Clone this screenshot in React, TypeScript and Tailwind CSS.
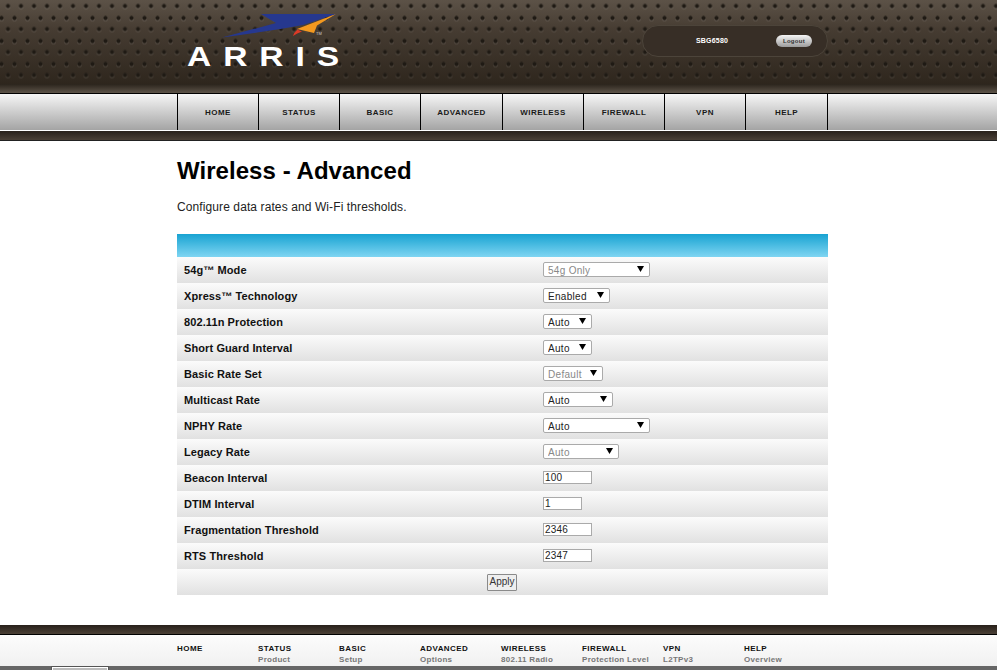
import React from "react";

const navItems: [string, string][] = [
  ["HOME", "w-[81px]"],
  ["STATUS", "w-[81px]"],
  ["BASIC", "w-[81px]"],
  ["ADVANCED", "w-[82px]"],
  ["WIRELESS", "w-[81px]"],
  ["FIREWALL", "w-[81px]"],
  ["VPN", "w-[81px]"],
  ["HELP", "w-[83px]"],
];

const footerCols: [string, string[]][] = [
  ["HOME", []],
  ["STATUS", ["Product", "Information"]],
  ["BASIC", ["Setup"]],
  ["ADVANCED", ["Options"]],
  ["WIRELESS", ["802.11 Radio"]],
  ["FIREWALL", ["Protection Level"]],
  ["VPN", ["L2TPv3"]],
  ["HELP", ["Overview"]],
];

type Row =
  | { label: string; kind: "select"; value: string; w: string; off?: boolean }
  | { label: string; kind: "input"; value: string; w: string };

const rows: Row[] = [
  { label: "54g™ Mode", kind: "select", value: "54g Only", w: "w-[107px]", off: true },
  { label: "Xpress™ Technology", kind: "select", value: "Enabled", w: "w-[67px]" },
  { label: "802.11n Protection", kind: "select", value: "Auto", w: "w-[49px]" },
  { label: "Short Guard Interval", kind: "select", value: "Auto", w: "w-[49px]" },
  { label: "Basic Rate Set", kind: "select", value: "Default", w: "w-[60px]", off: true },
  { label: "Multicast Rate", kind: "select", value: "Auto", w: "w-[70px]" },
  { label: "NPHY Rate", kind: "select", value: "Auto", w: "w-[107px]" },
  { label: "Legacy Rate", kind: "select", value: "Auto", w: "w-[76px]", off: true },
  { label: "Beacon Interval", kind: "input", value: "100", w: "w-[49px]" },
  { label: "DTIM Interval", kind: "input", value: "1", w: "w-[39px]" },
  { label: "Fragmentation Threshold", kind: "input", value: "2346", w: "w-[49px]" },
  { label: "RTS Threshold", kind: "input", value: "2347", w: "w-[49px]" },
];

function Logo() {
  return (
    <div className="relative w-[160px] h-[70px]">
      <svg width="160" height="40" viewBox="0 0 160 40" className="absolute left-0 top-0">
        <path d="M35 37.5 L89 23 L74 14 L149 14 L116 25 Q90 30 35 37.5 Z" fill="#26388f" />
        <path d="M149 14 L110 29 L127 33 L130 25.5 Z" fill="#f4991f" />
        <path d="M106 36 Q107 30 118 25.5 L110 29.5 L115 31.5 Q110 33 106 36 Z" fill="#dd3a26" />
      </svg>
      <div className="absolute left-0 top-[40px] text-[28px] leading-[34px] font-bold text-white tracking-[9.9px] whitespace-nowrap origin-left scale-x-[1.2]">
        ARRIS
      </div>
      <div className="absolute left-[129px] top-[31px] text-[4px] leading-[5px] text-[#ccc]">TM</div>
    </div>
  );
}

function Arrow() {
  return (
    <svg width="7" height="6" viewBox="0 0 7 6" className="absolute right-[6px] top-[4px] pointer-events-none">
      <path d="M0 0 H7 L3.5 6 Z" fill="#000" />
    </svg>
  );
}

export default function App() {
  return (
    <div className="h-[670px] w-[997px] overflow-hidden bg-white flex flex-col font-['Liberation_Sans',Arial,sans-serif]">
      <header className="shrink-0">
        <div className="h-[84px] bg-[linear-gradient(#5c5247,#463c32_35%,#2e261d)] relative">
          <div className="absolute inset-0 bg-[radial-gradient(circle,#1f1a14_1.8px,transparent_2.4px),radial-gradient(circle,#1f1a14_1.8px,transparent_2.4px),radial-gradient(circle,#ffffff14_2.2px,transparent_2.9px),radial-gradient(circle,#ffffff14_2.2px,transparent_2.9px)] bg-size-[13px_23px] bg-position-[1.5px_-5.5px,-5px_6.5px,1.5px_-4.5px,-5px_7.5px]" />
          <div className="relative h-full flex items-start justify-between pl-[187px] pr-[169px]">
            <Logo />
            <div className="mt-[25px] h-[32px] w-[186px] rounded-[16px] border border-[#4c443a] bg-[#372e26] flex items-center">
              <span className="ml-[53px] w-[80px] text-[7px] font-bold text-white tracking-[0.2px]">SBG6580</span>
              <button className="h-[12px] w-[36px] rounded-full bg-[linear-gradient(#f5f5f5,#9c9c9c)] text-[6px] font-bold text-[#333] leading-none tracking-[0.3px]">
                Logout
              </button>
            </div>
          </div>
        </div>
        <div className="h-[9px] bg-[linear-gradient(#2b241c,#5c5348)]" />
        <nav className="h-[38px] border-t border-black border-b border-b-white bg-[linear-gradient(#f6f6f6,#a4a4a4)] pl-[177px] flex text-[8px]">
          {navItems.map(([n, w]) => (
            <div
              key={n}
              className={`${w} border-l border-black last:border-r flex items-center justify-center pt-px font-bold text-[#1a1a1a] tracking-[0.45px]`}
            >
              {n}
            </div>
          ))}
        </nav>
        <div className="h-[9px] bg-[linear-gradient(#28201a,#4a4036)]" />
        <div className="h-px bg-[#222]" />
      </header>

      <main className="pl-[177px] w-[828px] box-content shrink-0">
        <h1 className="mt-[16px] text-[24px] leading-[28px] font-bold text-black tracking-[0.05px]">Wireless - Advanced</h1>
        <p className="mt-[15px] text-[12px] leading-[14px] text-[#222] tracking-[0.1px]">Configure data rates and Wi-Fi thresholds.</p>
        <section className="mt-[20px] w-[651px]">
          <div className="h-[23px] bg-[linear-gradient(#18a3d2,#7fd5f2)]" />
          {rows.map((r) => (
            <div key={r.label} className="h-[26px] flex items-center bg-[linear-gradient(#fbfbfb,#e1e1e1)]">
              <div className="w-[366px] pl-[7px] text-[11px] font-bold text-[#111] tracking-[0.1px]">{r.label}</div>
              {r.kind === "select" ? (
                <div className={`relative h-[15px] mb-px ${r.w}`}>
                  <select
                    disabled={r.off}
                    defaultValue={r.value}
                    className={`appearance-none block w-full h-full bg-white border border-[#aaa] rounded-[2px] pl-[4px] pt-[2px] text-[10px] leading-[12px] tracking-[0.3px] ${r.off ? "text-[#888]" : "text-[#222]"}`}
                  >
                    <option>{r.value}</option>
                  </select>
                  <Arrow />
                </div>
              ) : (
                <input
                  readOnly
                  value={r.value}
                  className={`block h-[13px] mb-px ${r.w} bg-white border border-[#aaa] pl-px text-[10px] text-[#222] tracking-[0.2px] outline-none`}
                />
              )}
            </div>
          ))}
          <div className="h-[26px] flex items-center justify-center bg-[linear-gradient(#fbfbfb,#e1e1e1)]">
            <button className="h-[17px] w-[30px] mr-px bg-[#eeeeee] border border-[#8a8a8a] rounded-[1px] text-[10px] text-[#333] leading-none">
              Apply
            </button>
          </div>
        </section>
      </main>

      <footer className="mt-[30px] flex-1 flex flex-col relative overflow-hidden">
        <div className="h-[10px] shrink-0 bg-[linear-gradient(#28201a,#4a4036)] border-b border-black" />
        <div className="h-[31px] shrink-0 bg-[linear-gradient(#fcfcfc,#f1f1f1)] pl-[177px] flex overflow-hidden">
          {footerCols.map(([h, subs]) => (
            <div key={h} className="w-[81px] pt-[8px]">
              <div className="text-[8px] leading-[11px] font-bold text-[#111] tracking-[0.45px]">{h}</div>
              <div className="mt-px">
                {subs.map((s) => (
                  <div key={s} className="text-[8px] leading-[9px] font-bold text-[#777] tracking-[0.3px] whitespace-nowrap">
                    {s}
                  </div>
                ))}
              </div>
            </div>
          ))}
        </div>
        <div className="flex-1 bg-[#666]" />
        <div className="absolute left-[51px] top-[41px] w-[58px] h-[8px] bg-[#bbb] border border-[#555]">
          <div className="h-full border-l border-t border-r border-white" />
        </div>
      </footer>
    </div>
  );
}
